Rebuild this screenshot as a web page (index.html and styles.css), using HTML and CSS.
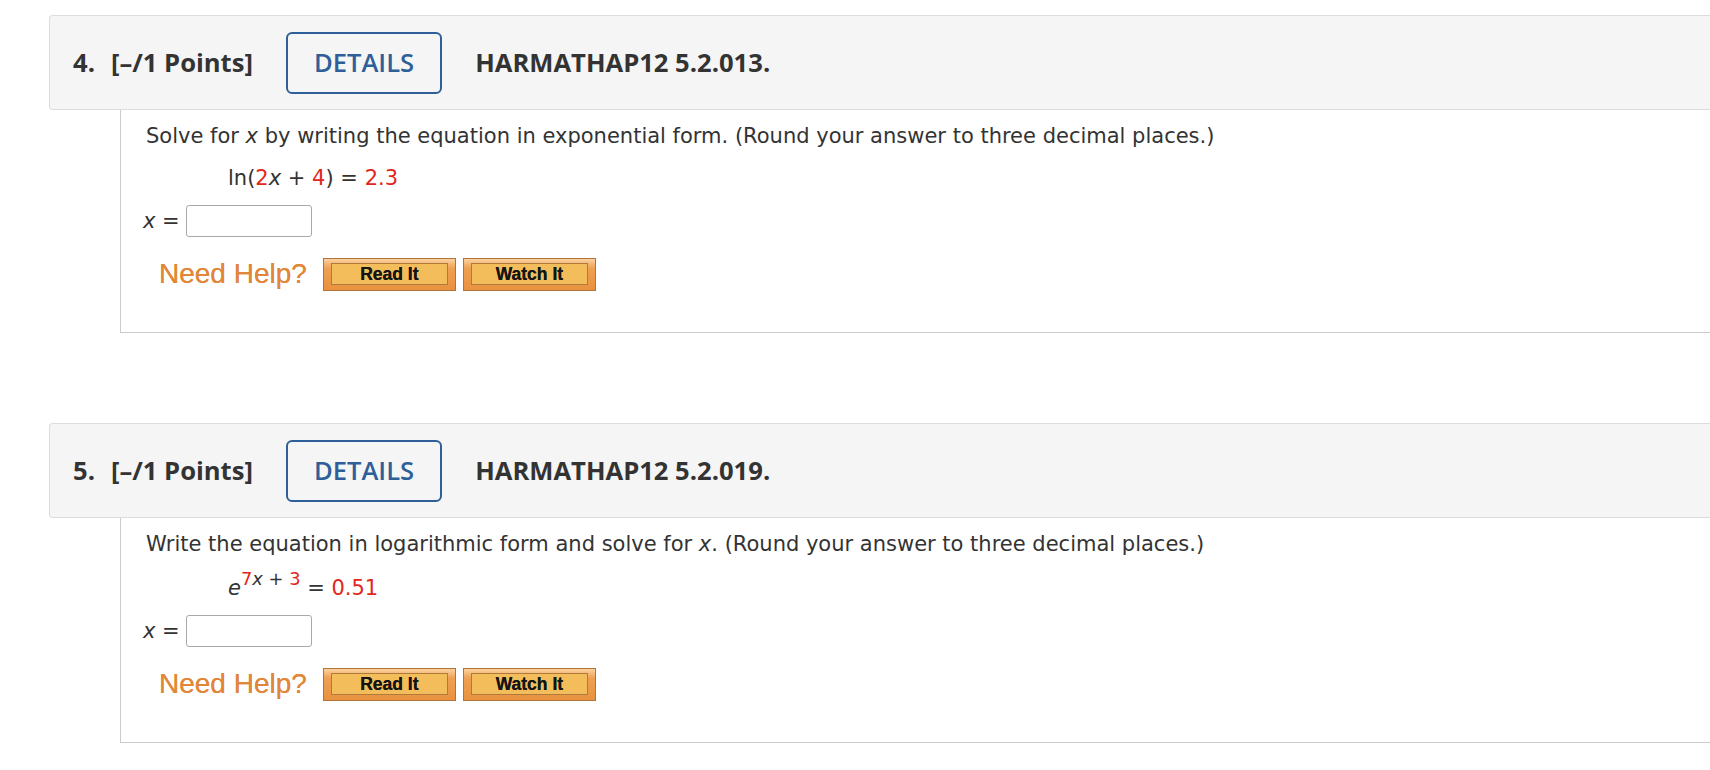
FILE: index.html
```html
<!DOCTYPE html>
<html lang="en">
<head>
<meta charset="utf-8">
<title>Questions</title>
<link rel="stylesheet" href="styles.css">
</head>
<body>
<div class="page">
  <section class="question">
    <div class="q-header">
      <span class="q-num">4.</span>
      <span class="q-points">[–/1 Points]</span>
      <span class="details">DETAILS</span>
      <span class="q-code">HARMATHAP12 5.2.013.</span>
    </div>
    <div class="q-body">
      <p class="prompt">Solve for <i>x</i> by writing the equation in exponential form. (Round your answer to three decimal places.)</p>
      <p class="eq">ln(<span class="red">2</span><i>x</i> + <span class="red">4</span>) = <span class="red">2.3</span></p>
      <div class="answer"><span class="ans-label"><i>x</i> =</span><span class="ans-box"></span></div>
      <div class="help">
        <span class="need-help">Need Help?</span>
        <span class="help-btn"><span class="help-inner">Read It</span></span>
        <span class="help-btn"><span class="help-inner">Watch It</span></span>
      </div>
    </div>
  </section>

  <section class="question">
    <div class="q-header">
      <span class="q-num">5.</span>
      <span class="q-points">[–/1 Points]</span>
      <span class="details">DETAILS</span>
      <span class="q-code">HARMATHAP12 5.2.019.</span>
    </div>
    <div class="q-body">
      <p class="prompt">Write the equation in logarithmic form and solve for <i>x</i>. (Round your answer to three decimal places.)</p>
      <p class="eq eq-sup"><i>e</i><sup><span class="red">7</span><i>x</i> + <span class="red">3</span></sup> = <span class="red">0.51</span></p>
      <div class="answer"><span class="ans-label"><i>x</i> =</span><span class="ans-box"></span></div>
      <div class="help">
        <span class="need-help">Need Help?</span>
        <span class="help-btn"><span class="help-inner">Read It</span></span>
        <span class="help-btn"><span class="help-inner">Watch It</span></span>
      </div>
    </div>
  </section>
</div>
</body>
</html>
```
FILE: styles.css
```css
* { box-sizing: border-box; }

html, body {
  margin: 0;
  padding: 0;
  background: #ffffff;
}

.page {
  padding: 15px 0 0 49px;
  color: #333333;
}

.question {
  margin-bottom: 90px;
}

.question:last-child {
  margin-bottom: 0;
}

.q-header {
  height: 95px;
  display: flex;
  align-items: center;
  padding-left: 23px;
  background: #f5f5f5;
  border: 1px solid #dddddd;
  border-right: none;
  border-radius: 4px 0 0 4px;
  font-family: "Open Sans", "Liberation Sans", sans-serif;
  font-size: 25.6px;
  font-weight: 700;
  color: #333333;
}

.q-num {
  margin-right: 16px;
}

.q-points {
  margin-right: 33px;
}

.details {
  height: 62px;
  padding: 0 26px;
  display: flex;
  align-items: center;
  border: 2px solid #2e5f99;
  border-radius: 6px;
  color: #2e5f99;
  font-weight: 600;
  margin-right: 33px;
}

.q-body {
  margin-left: 71px;
  border-left: 1px solid #cccccc;
  border-bottom: 1px solid #cccccc;
  padding: 13px 0 41px 25px;
  font-family: "DejaVu Sans", Verdana, sans-serif;
  font-size: 21px;
  line-height: 26px;
  color: #333333;
}

.prompt {
  margin: 0;
}

.eq {
  margin: 16px 0 0 82px;
}

.eq-sup {
  margin-top: 18px;
}

.eq sup {
  font-size: 85%;
  line-height: 0;
  vertical-align: 10px;
}

.red {
  color: #e3261c;
}

.answer {
  margin-top: 14px;
  display: flex;
  align-items: center;
  height: 32px;
  margin-left: -3px;
}

.ans-label {
  margin-right: 6px;
}

.ans-box {
  width: 126px;
  height: 32px;
  border: 1px solid #a9a9a9;
  border-radius: 3px;
  background: #ffffff;
}

.help {
  margin-top: 20px;
  display: flex;
  align-items: center;
  height: 34px;
  padding-left: 13px;
}

.need-help {
  font-family: "Liberation Sans", Arial, sans-serif;
  font-size: 28px;
  line-height: 34px;
  color: #e2873a;
  margin-right: 16px;
  text-shadow: 0 0 0.6px #e2873a;
}

.help-btn {
  width: 133px;
  height: 33px;
  margin-right: 7px;
  padding: 4px 7px 5px 7px;
  border: 1px solid #b0743a;
  background: linear-gradient(#fbd2a0 0%, #efa052 30%, #e9923f 100%);
  display: block;
}

.help-inner {
  display: flex;
  align-items: center;
  justify-content: center;
  height: 100%;
  border: 1px solid #b07a3c;
  background: #f3bd5c;
  font-family: "Liberation Sans", Arial, sans-serif;
  font-size: 17.5px;
  font-weight: 700;
  color: #151515;
  text-shadow: 0 0 0.6px #151515;
}
```
